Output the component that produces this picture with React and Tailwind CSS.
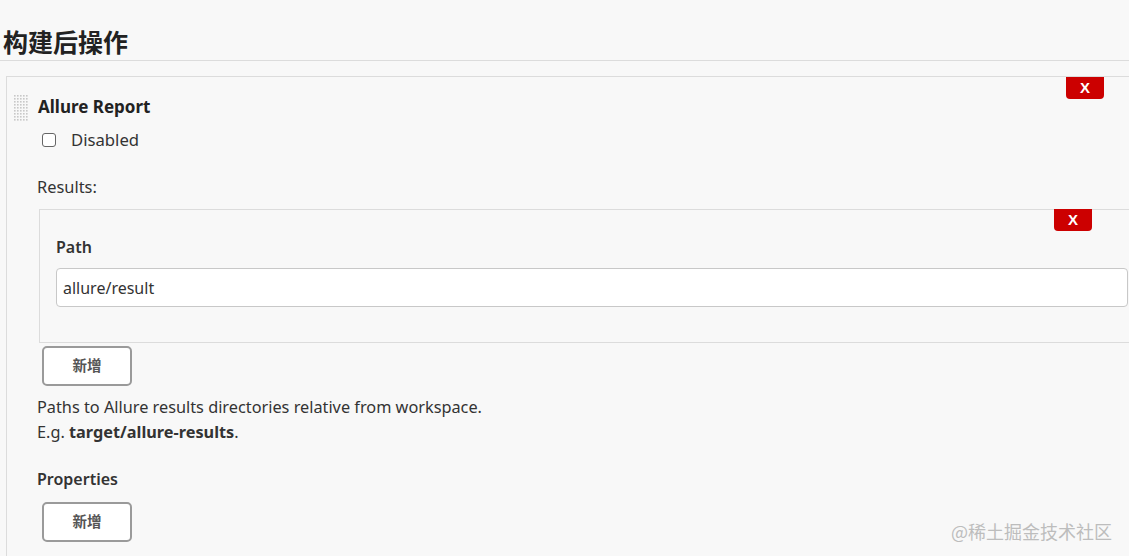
const font = { fontFamily: '"Noto Sans", "Noto Sans CJK SC", sans-serif' };

function DeleteButton({ className }) {
  return (
    <button
      className={`absolute w-[38px] h-[22px] bg-[#cc0000] rounded-b-[4px] text-white text-[15px] font-bold leading-[22px] text-center ${className}`}
      style={{ fontFamily: '"Liberation Sans", Arial, sans-serif' }}
    >
      X
    </button>
  );
}

function AddButton() {
  return (
    <button className="w-[90px] h-[40px] bg-white border-2 border-[#9a9a9a] rounded-[5px] text-[14.5px] font-bold text-[#555]">
      新增
    </button>
  );
}

function DragHandle() {
  return (
    <svg width="15" height="26" viewBox="0 0 15 26" className="mt-[1px]">
      {Array.from({ length: 9 }).map((_, r) =>
        Array.from({ length: 5 }).map((_, c) => (
          <rect key={`${r}-${c}`} x={c * 3} y={r * 3} width="1.6" height="1.6" fill="#c8c8c8" />
        ))
      )}
    </svg>
  );
}

export default function App() {
  return (
    <div className="min-h-[556px] w-[1129px] bg-[#f8f8f8] text-[#333] overflow-hidden relative" style={font}>
      <h2 className="pt-[26px] pl-[3px] h-[61px] text-[25px] font-bold leading-[32px] text-[#222] border-b border-[#dcdcdc]">
        构建后操作
      </h2>

      <div className="relative mt-[15px] ml-[6px] border-t border-l border-[#dcdcdc] pl-[30px] pb-[20px]">
        <DeleteButton className="top-0 right-[25px]" />
        <div className="flex items-center h-[30px] mt-[15px] -ml-[23px]">
          <DragHandle />
          <span className="ml-[9px] text-[17px] font-bold text-[#222]">Allure Report</span>
        </div>
        <label className="flex items-center h-[30px] mt-[3px] ml-[5px]">
          <span className="w-[14px] h-[14px] border border-[#666] rounded-[3px] bg-white" />
          <span className="ml-[15px] text-[16.7px] text-[#333]">Disabled</span>
        </label>
        <div className="mt-[22px] h-[20px] leading-[20px] text-[16.4px]">Results:</div>

        <div className="relative mt-[12px] ml-[2px] border-t border-l border-b border-[#dcdcdc] pl-[16px] pt-[26px] pb-[35px]">
          <DeleteButton className="-top-px right-[37px]" />
          <div className="h-[22px] leading-[22px] text-[16px] font-semibold text-[#333]">Path</div>
          <div className="mt-[10px] mr-[1px] h-[39px] bg-white border border-[#c8c8c8] rounded-[4px] px-[6px] flex items-center text-[16px] text-[#333]">
            allure/result
          </div>
        </div>

        <div className="mt-[3px] ml-[5px]">
          <AddButton />
        </div>
        <div className="mt-[9px] text-[16.3px] leading-[25px] text-[#333]">
          <div>Paths to Allure results directories relative from workspace.</div>
          <div>
            E.g. <b>target/allure-results</b>.
          </div>
        </div>
        <div className="mt-[24px] text-[16px] font-semibold leading-[20px] text-[#333]">Properties</div>
        <div className="mt-[13px] ml-[5px]">
          <AddButton />
        </div>
      </div>

      <div className="absolute left-0 bottom-[1px] w-[295px] h-[2px] bg-[#c7ccc8]" />
      <div
        className="absolute right-[17px] bottom-[17px] text-[18px] text-[#bdbdbd]"
        style={{ fontFamily: '"Noto Sans CJK SC", sans-serif' }}
      >
        @稀土掘金技术社区
      </div>
    </div>
  );
}
